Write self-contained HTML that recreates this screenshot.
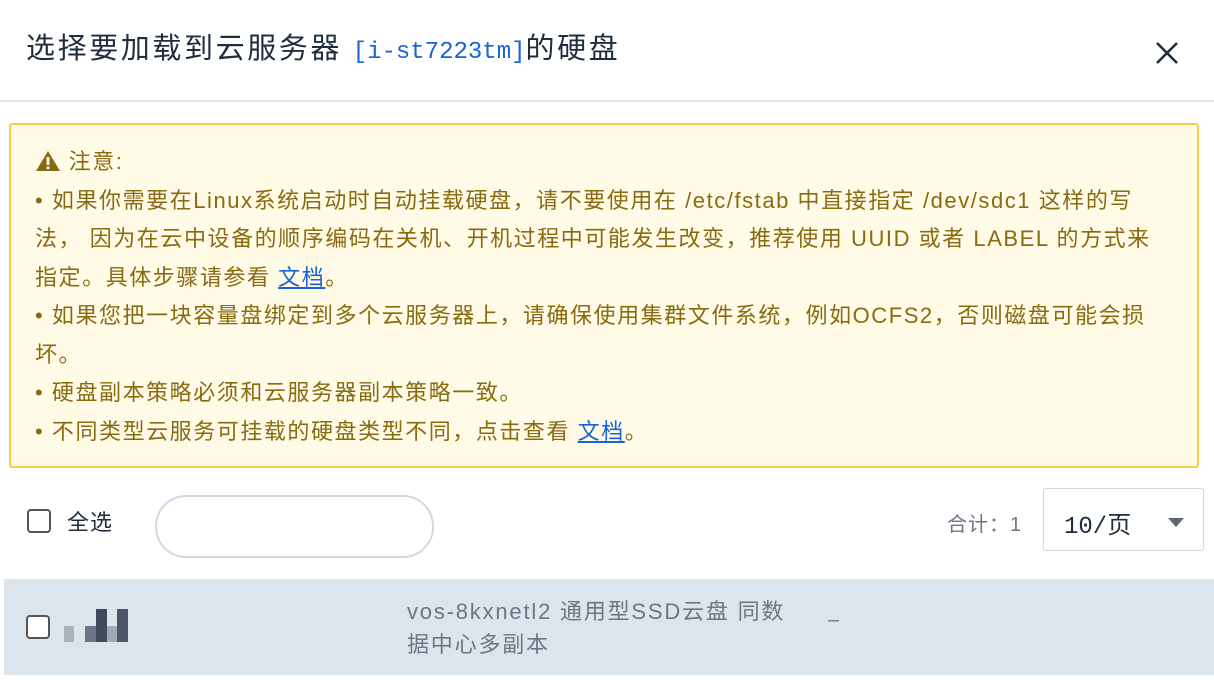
<!DOCTYPE html>
<html><head><meta charset="utf-8"><style>
body{margin:0;width:1214px;height:688px;background:#fff;font-family:"Liberation Sans","Noto Sans CJK SC",sans-serif;position:relative;overflow:hidden}
.title{position:absolute;left:26px;top:29px;font-size:29px;letter-spacing:2.6px;color:#1f2d3d;white-space:nowrap;line-height:40px}
.title .id{font-family:"Liberation Mono","Noto Sans CJK SC",monospace;color:#1863d6;font-size:24px;letter-spacing:0}
.close{position:absolute;left:1154px;top:40px}
.hr{position:absolute;left:0;right:0;top:100px;height:2px;background:#dde5ec}
.note{position:absolute;left:9px;top:123px;width:1190px;height:345px;border:2px solid #f6cf4a;border-radius:3px;background:#fffbe6;color:#8a6a10;font-size:22px;letter-spacing:1.55px;line-height:38.5px;box-sizing:border-box;padding:18px 24px 0 24px}
.note a{color:#1863d6;text-decoration:underline}
.cb{position:absolute;width:24px;height:24px;border:2px solid #555;border-radius:4px;box-sizing:border-box;background:#fff}
.search{position:absolute;left:155px;top:495px;width:279px;height:63px;border:2px solid #cfd9e4;border-radius:31px;box-sizing:border-box}
.sel{position:absolute;left:1043px;top:488px;width:161px;height:63px;border:1px solid #cfd9e4;border-radius:3px;box-sizing:border-box;font-family:"Liberation Mono","Noto Sans CJK SC",monospace;font-size:24px;color:#1f2d3d;padding:16px 0 0 20px}
.row{position:absolute;left:4px;top:579px;width:1210px;height:96px;background:#dde5ec}
</style></head><body>
<div class="title">选择要加载到云服务器 <span class="id">[i-st7223tm]</span>的硬盘</div>
<svg class="close" width="26" height="26" viewBox="0 0 26 26"><path d="M3 3L23 23M23 3L3 23" stroke="#1f2d3d" stroke-width="2.6"/></svg>
<div class="hr"></div>
<div class="note">
<div><svg width="26" height="22" viewBox="0 0 26 22" style="vertical-align:-3px"><path d="M13 1L25 21H1Z" fill="#8a6a10"/><rect x="11.6" y="7" width="2.8" height="8" fill="#fffbe6"/><rect x="11.6" y="16.5" width="2.8" height="2.6" fill="#fffbe6"/></svg> 注意:</div>
<div>• 如果你需要在Linux系统启动时自动挂载硬盘，请不要使用在 /etc/fstab 中直接指定 /dev/sdc1 这样的写法， 因为在云中设备的顺序编码在关机、开机过程中可能发生改变，推荐使用 UUID 或者 LABEL 的方式来指定。具体步骤请参看 <a>文档</a>。</div>
<div>• 如果您把一块容量盘绑定到多个云服务器上，请确保使用集群文件系统，例如OCFS2，否则磁盘可能会损坏。</div>
<div>• 硬盘副本策略必须和云服务器副本策略一致。</div>
<div>• 不同类型云服务可挂载的硬盘类型不同，点击查看 <a>文档</a>。</div>
</div>
<div class="cb" style="left:27px;top:509px"></div>
<div style="position:absolute;left:67px;top:505px;font-size:22px;color:#1f2d3d;letter-spacing:1px">全选</div>
<div class="search"></div>
<div style="position:absolute;left:947px;top:508px;font-size:20px;color:#6b7785;letter-spacing:1px">合计：1</div>
<div class="sel">10/页<svg style="position:absolute;left:124px;top:29px" width="16" height="9"><path d="M0 0H16L8 9Z" fill="#5c6773"/></svg></div>
<div class="row">
<div class="cb" style="left:22px;top:36px"></div>
<div style="position:absolute;left:56px;top:30px;width:100px;height:33px">
<div style="position:absolute;left:4px;top:17px;width:10px;height:16px;background:#a9b2bd"></div>
<div style="position:absolute;left:25px;top:17px;width:11px;height:16px;background:#6a7585"></div>
<div style="position:absolute;left:36px;top:0;width:11px;height:33px;background:#3f4a5c"></div>
<div style="position:absolute;left:47px;top:17px;width:10px;height:16px;background:#a0a9b5"></div>
<div style="position:absolute;left:57px;top:0;width:11px;height:33px;background:#4b5669"></div>
</div>
<div style="position:absolute;left:403px;top:16px;font-size:22px;letter-spacing:1.8px;line-height:33px;color:#6b7785;width:420px">vos-8kxnetl2 通用型SSD云盘 同数<br>据中心多副本</div>
<div style="position:absolute;left:824px;top:30px;font-size:20px;color:#6b7785">–</div>
</div>
</body></html>
